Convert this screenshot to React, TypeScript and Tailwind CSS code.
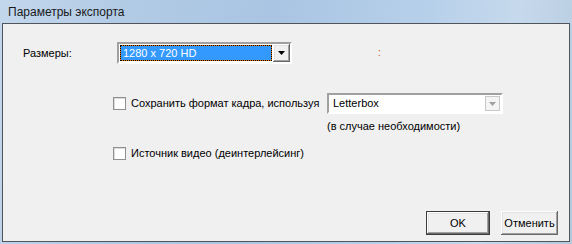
import React from "react";

const raised =
  "shadow-[inset_-1px_-1px_0_#696969,inset_1px_1px_0_#ffffff,inset_-2px_-2px_0_#a0a0a0,inset_2px_2px_0_#e3e3e3]";
const sunken =
  "border-t-[#a0a0a0] border-l-[#a0a0a0] border-b-white border-r-white shadow-[inset_1px_1px_0_#696969,inset_-1px_-1px_0_#e3e3e3]";

const Arrow = ({ color }: { color: string }) => (
  <svg width="7" height="4" viewBox="0 0 7 4">
    <path d="M0 0h7L3.5 4z" fill={color} />
  </svg>
);

const Checkbox = () => (
  <div className="w-[13px] h-[13px] border border-[#8e8f8f] bg-white shadow-[inset_1px_1px_0_#dcdcdc] shrink-0" />
);

const App: React.FC = () => {
  return (
    <div
      className="w-[572px] h-[244px] flex flex-col overflow-hidden bg-[linear-gradient(100deg,#c3d7ec_0%,#b2cbe5_20%,#a9c5e3_45%,#b7d0ea_70%,#c6d9ec_85%,#b4c9dc_100%)]"
      style={{ fontFamily: '"Liberation Sans", Arial, sans-serif' }}
    >
      <div className="h-[23px] flex items-center px-[8px] text-[12px] text-[#1a1a1a] shrink-0">
        Параметры экспорта
      </div>
      <div className="mx-[2px] mb-[2px] flex-1 flex flex-col border border-[#50555c] bg-[#f0f0f0] text-[11px] text-black whitespace-nowrap">
        <div className="flex items-center mt-[18px] pl-[20px] h-[22px]">
          <span className="w-[94px]">Размеры:</span>
          <div className={`w-[175px] h-[22px] flex border-2 ${sunken}`}>
            <div className="flex-1 p-[1px] bg-white">
              <div className="h-full bg-[#e07800]">
                <div className="h-full border border-dotted border-black bg-[#3399ff] bg-clip-padding text-white flex items-center pl-[2px] leading-none">
                  1280 x 720 HD
                </div>
              </div>
            </div>
            <div className={`w-[17px] h-full bg-[#f0f0f0] flex items-center justify-center ${raised}`}>
              <Arrow color="#000" />
            </div>
          </div>
          <span className="ml-[86px] text-[#c05000] text-[10px] leading-none">:</span>
        </div>

        <div className="flex items-center mt-[29px] pl-[110px] h-[21px]">
          <Checkbox />
          <span className="ml-[5px] w-[196px]">Сохранить формат кадра, используя</span>
          <div className={`w-[176px] h-[21px] flex border-2 ${sunken}`}>
            <div className="flex-1 bg-white flex items-center pl-[4px]">Letterbox</div>
            <div className="w-[17px] h-full bg-white flex items-center justify-center">
              <div className="w-[15px] h-[15px] border border-[#c8c8c8] bg-[#f4f4f4] flex items-center justify-center">
                <Arrow color="#a0a0a0" />
              </div>
            </div>
          </div>
        </div>
        <div className="pl-[324px] mt-[5px] leading-[14px]">(в случае необходимости)</div>

        <div className="flex items-center mt-[13px] pl-[110px] h-[14px]">
          <Checkbox />
          <span className="ml-[5px]">Источник видео (деинтерлейсинг)</span>
        </div>

        <div className="flex-1" />
        <div className="flex justify-end gap-[11px] pr-[11px] pb-[6px]">
          <button className={`w-[64px] h-[24px] border border-[#3c3c3c] bg-[#f0f0f0] ${raised}`}>
            OK
          </button>
          <button className={`w-[57px] h-[24px] bg-[#f0f0f0] ${raised}`}>Отменить</button>
        </div>
      </div>
    </div>
  );
};

export default App;
